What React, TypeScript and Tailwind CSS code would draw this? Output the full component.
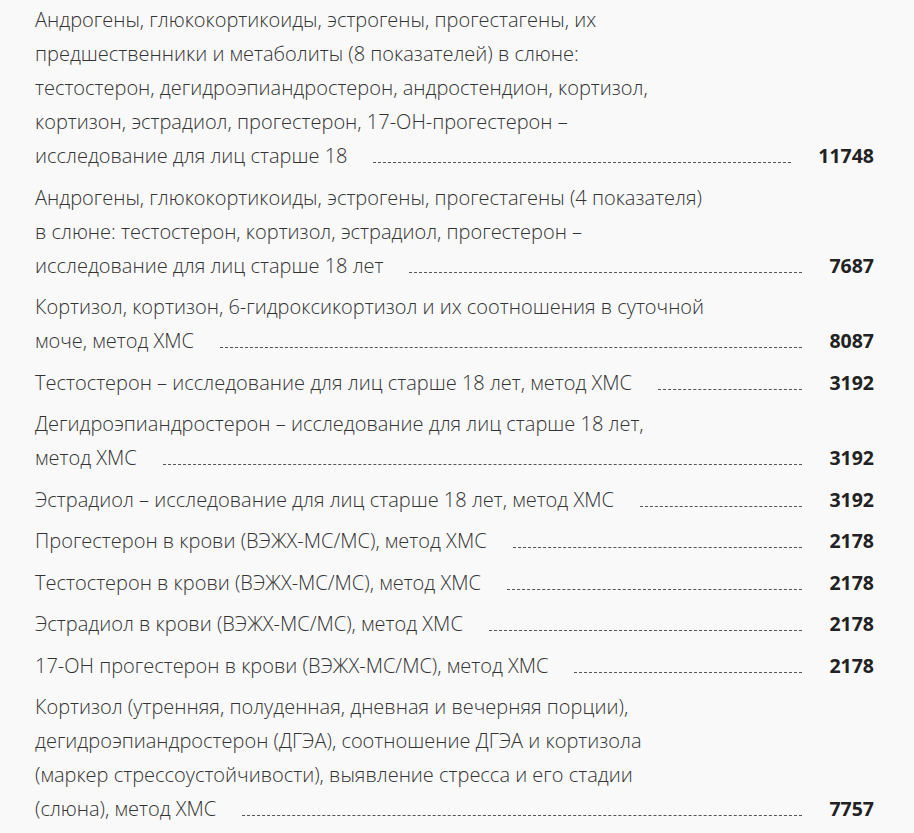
const ITEMS: { lines: string[]; price: string }[] = [
  {
    lines: [
      "Андрогены, глюкокортикоиды, эстрогены, прогестагены, их",
      "предшественники и метаболиты (8 показателей) в слюне:",
      "тестостерон, дегидроэпиандростерон, андростендион, кортизол,",
      "кортизон, эстрадиол, прогестерон, 17-ОН-прогестерон –",
      "исследование для лиц старше 18",
    ],
    price: "11748",
  },
  {
    lines: [
      "Андрогены, глюкокортикоиды, эстрогены, прогестагены (4 показателя)",
      "в слюне: тестостерон, кортизол, эстрадиол, прогестерон –",
      "исследование для лиц старше 18 лет",
    ],
    price: "7687",
  },
  {
    lines: [
      "Кортизол, кортизон, 6-гидроксикортизол и их соотношения в суточной",
      "моче, метод ХМС",
    ],
    price: "8087",
  },
  {
    lines: ["Тестостерон – исследование для лиц старше 18 лет, метод ХМС"],
    price: "3192",
  },
  {
    lines: [
      "Дегидроэпиандростерон – исследование для лиц старше 18 лет,",
      "метод ХМС",
    ],
    price: "3192",
  },
  {
    lines: ["Эстрадиол – исследование для лиц старше 18 лет, метод ХМС"],
    price: "3192",
  },
  { lines: ["Прогестерон в крови (ВЭЖХ-МС/МС), метод ХМС"], price: "2178" },
  { lines: ["Тестостерон в крови (ВЭЖХ-МС/МС), метод ХМС"], price: "2178" },
  { lines: ["Эстрадиол в крови (ВЭЖХ-МС/МС), метод ХМС"], price: "2178" },
  { lines: ["17-ОН прогестерон в крови (ВЭЖХ-МС/МС), метод ХМС"], price: "2178" },
  {
    lines: [
      "Кортизол (утренняя, полуденная, дневная и вечерняя порции),",
      "дегидроэпиандростерон (ДГЭА), соотношение ДГЭА и кортизола",
      "(маркер стрессоустойчивости), выявление стресса и его стадии",
      "(слюна), метод ХМС",
    ],
    price: "7757",
  },
];

function PriceRow({ lines, price }: { lines: string[]; price: string }) {
  const head = lines.slice(0, -1);
  const last = lines[lines.length - 1];
  return (
    <li className="mb-[7.5px]">
      {head.map((l) => (
        <div key={l} className="whitespace-nowrap">
          {l}
        </div>
      ))}
      <div className="flex items-end">
        <span className="whitespace-nowrap">{last}</span>
        <span className="mb-[10px] ml-[26px] h-0 flex-1 border-b border-dashed border-[#555]" />
        <span className="pl-[27px] text-[19.5px] font-bold text-[#222]">{price}</span>
      </div>
    </li>
  );
}

export default function App() {
  return (
    <div className="min-h-[833px] bg-[#f9f9f9] pl-[35px] pr-[40px] pt-[3px] font-['Open_Sans',sans-serif] text-[20px] font-light leading-[34px] text-[#333]">
      <ul>
        {ITEMS.map((it, i) => (
          <PriceRow key={i} lines={it.lines} price={it.price} />
        ))}
      </ul>
    </div>
  );
}
